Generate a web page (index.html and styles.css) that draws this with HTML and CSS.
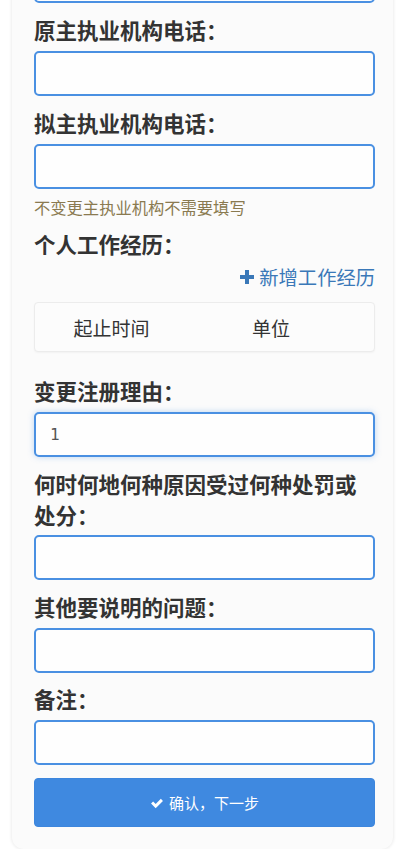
FILE: index.html
```html
<!DOCTYPE html>
<html lang="zh-CN">
<head>
<meta charset="utf-8">
<title>变更注册</title>
<link rel="stylesheet" href="styles.css">
</head>
<body>
<div class="card">
  <div class="field field-first">
    <input class="input" type="text">
  </div>
  <div class="field">
    <label class="label">原主执业机构电话：</label>
    <input class="input" type="text">
  </div>
  <div class="field">
    <label class="label">拟主执业机构电话：</label>
    <input class="input" type="text">
    <p class="hint">不变更主执业机构不需要填写</p>
  </div>
  <div class="field">
    <label class="label">个人工作经历：</label>
    <div class="add-row">
      <a class="add-link" href="#">
        <svg class="plus" viewBox="0 0 16 16" width="16" height="16"><path d="M6 1h4v5h5v4h-5v5H6v-5H1V6h5z" fill="currentColor"/></svg>
        <span>新增工作经历</span>
      </a>
    </div>
    <div class="table">
      <div class="th th-time">起止时间</div>
      <div class="th th-unit">单位</div>
    </div>
  </div>
  <div class="field">
    <label class="label">变更注册理由：</label>
    <input class="input input-focus" type="text" value="1">
  </div>
  <div class="field">
    <label class="label label-multi">何时何地何种原因受过何种处罚或处分：</label>
    <input class="input" type="text">
  </div>
  <div class="field">
    <label class="label label-tight">其他要说明的问题：</label>
    <input class="input" type="text">
  </div>
  <div class="field">
    <label class="label label-tight">备注：</label>
    <input class="input" type="text">
  </div>
  <button class="btn" type="button">
    <svg class="check" viewBox="0 0 16 16" width="14" height="14"><path d="M1.2 8.6l2.4-2.4 2.9 2.9 5.9-5.9 2.4 2.4-8.3 8.3z" fill="currentColor"/></svg>
    <span>确认，下一步</span>
  </button>
</div>
</body>
</html>
```
FILE: styles.css
```css
html, body {
  margin: 0;
  padding: 0;
  background: #ffffff;
}
body {
  font-family: "Noto Sans CJK SC", "Noto Sans", sans-serif;
  color: #333333;
  overflow: hidden;
}
.card {
  box-sizing: border-box;
  width: 381px;
  margin: -52px 0 0 12px;
  padding: 10px 18px 22px 22px;
  background: #fbfbfb;
  border-radius: 12px;
  box-shadow: 0 0 3px 1px rgba(0, 0, 0, 0.07);
}
.field {
  display: flex;
  flex-direction: column;
}
.label {
  display: block;
  margin: 11px 0 5px;
  font-size: 21.5px;
  line-height: 32px;
  font-weight: 700;
  color: #333333;
}
.label-multi {
  line-height: 31px;
}
.label-tight {
  margin-top: 10.5px;
}
.input {
  box-sizing: border-box;
  display: block;
  width: 100%;
  height: 45px;
  margin: 0;
  padding: 0 14px;
  border: 2px solid #4a90e2;
  border-radius: 5px;
  background: #fefefe;
  font-family: "DejaVu Sans Mono", monospace;
  font-size: 16px;
  color: #555555;
  outline: none;
}
.input-focus {
  box-shadow: 0 0 6px rgba(74, 144, 226, 0.35);
}
.hint {
  margin: 8px 0 0;
  font-size: 16.3px;
  line-height: 20px;
  color: #8a7a50;
}
.add-row {
  display: flex;
  justify-content: flex-end;
  height: 28px;
  margin-top: -2px;
}
.add-link {
  display: flex;
  align-items: center;
  gap: 4px;
  height: 28px;
  font-size: 19.3px;
  line-height: 28px;
  color: #3a78b8;
  text-decoration: none;
}
.plus {
  display: block;
  color: #3a78b8;
}
.table {
  box-sizing: border-box;
  display: flex;
  align-items: center;
  height: 50px;
  margin: 11px 0 12px;
  border: 1px solid #ececec;
  border-radius: 4px;
  background: #fcfcfc;
  box-shadow: 0 1px 2px rgba(0, 0, 0, 0.04);
  font-size: 19px;
  color: #333333;
}
.th {
  text-align: center;
}
.th-time {
  width: 153px;
}
.th-unit {
  width: 166px;
}
.btn {
  box-sizing: border-box;
  display: flex;
  align-items: center;
  justify-content: center;
  gap: 5px;
  width: 100%;
  height: 49px;
  margin-top: 13px;
  padding: 0;
  border: 1px solid #3d86dd;
  border-radius: 4px;
  background: #3f89e0;
  color: #ffffff;
  font-family: "Noto Sans CJK SC", "Noto Sans", sans-serif;
  font-size: 15px;
}
.check {
  display: block;
}
```
